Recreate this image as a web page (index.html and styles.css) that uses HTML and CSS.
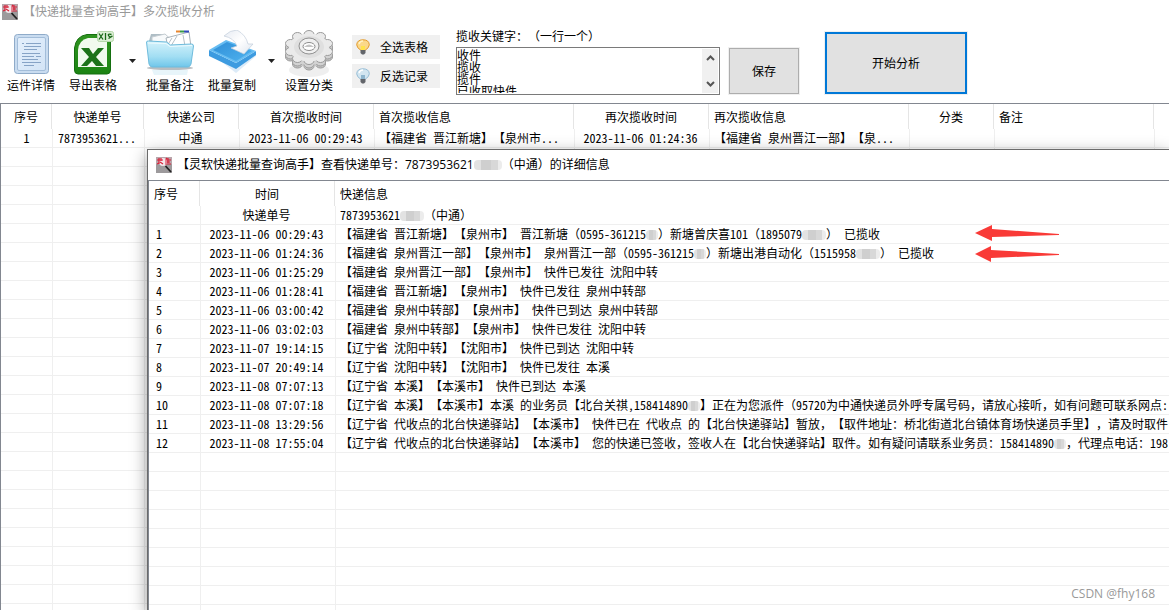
FILE: index.html
```html
<!DOCTYPE html>
<html lang="zh-CN">
<head>
<meta charset="utf-8">
<title>多次揽收分析</title>
<link rel="stylesheet" href="styles.css">
</head>
<body>
<svg class="defs" aria-hidden="true">
  <defs>
    <linearGradient id="paper" x1="0" y1="0" x2="1" y2="1"><stop offset="0" stop-color="#e3effc"/><stop offset="1" stop-color="#d3e4f6"/></linearGradient>
    <linearGradient id="green" x1="0" y1="0" x2="0" y2="1"><stop offset="0" stop-color="#2f9420"/><stop offset="1" stop-color="#1c8413"/></linearGradient>
    <linearGradient id="folder" x1="0" y1="0" x2="0" y2="1"><stop offset="0" stop-color="#d4f2fb"/><stop offset=".6" stop-color="#a2def3"/><stop offset="1" stop-color="#6fc6ea"/></linearGradient>
    <linearGradient id="blue" x1="0" y1="0" x2="1" y2="1"><stop offset="0" stop-color="#2f8fd8"/><stop offset="1" stop-color="#4fb2ee"/></linearGradient>
    <linearGradient id="page" x1="0" y1="0" x2="1" y2="1"><stop offset="0" stop-color="#e6ebf3"/><stop offset=".5" stop-color="#ffffff"/><stop offset="1" stop-color="#dfe6ef"/></linearGradient>
    <symbol id="app" viewBox="0 0 16 16">
      <rect width="16" height="16" fill="#9d9a9c"/>
      <rect width="16" height="7" fill="#b9a5ab"/>
      <circle cx="7" cy="5" r="4" fill="#f3e6ea"/>
      <path d="M1 3h6M3 1v6M5 1v3M4 5l3 2M1 7l2-1M9 3h6M9 5h5M12 1v5M9 7h6M10 1l1 1" stroke="#d8233a" stroke-width="1.200" fill="none"/>
      <path d="M9.500 9l5.500 6" stroke="#222" stroke-width="1.800"/>
    </symbol>
    <g id="cog">
      <g stroke="#9a9a9a">
        <ellipse cx="42.500" cy="14" rx="5" ry="4"/><ellipse cx="42.500" cy="22" rx="5" ry="4"/>
        <ellipse cx="35.500" cy="7" rx="5" ry="4"/><ellipse cx="35.500" cy="29" rx="5" ry="4"/>
        <ellipse cx="24" cy="5" rx="5" ry="4"/><ellipse cx="24" cy="31" rx="5" ry="4"/>
        <ellipse cx="12.500" cy="7" rx="5" ry="4"/><ellipse cx="12.500" cy="29" rx="5" ry="4"/>
        <ellipse cx="5.500" cy="14" rx="5" ry="4"/><ellipse cx="5.500" cy="22" rx="5" ry="4"/>
      </g>
      <ellipse cx="24" cy="18" rx="20" ry="14"/>
    </g>
  </defs>
</svg>

<main class="app">
  <header class="titlebar muted">
    <svg class="appicon" aria-hidden="true"><use href="#app"/></svg>
    <h1>【快递批量查询高手】多次揽收分析</h1>
  </header>

  <div class="toolbar">
    <div class="tools">
      <button class="tool" type="button">
        <svg viewBox="0 0 48 48" aria-hidden="true">
          <rect x="7.500" y="4.500" width="34" height="39" rx="3" fill="#c9dcf0" stroke="#8fabc9"/>
          <rect x="10.500" y="7.500" width="28" height="33" rx="1.500" fill="url(#paper)" stroke="#a3bdd9"/>
          <path d="M15 13.500h2M19 13.500h15M17 16.500h17M17 19.500h13M15 23.500h18M15 26.500h12M29 26.500h5M15 29.500h16M15 32.500h19M17 35.500h10" stroke="#86a3c6"/>
        </svg>
        <span>运件详情</span>
      </button>
      <button class="tool" type="button">
        <svg viewBox="0 0 48 48" aria-hidden="true">
          <path d="M18 4.500H41.500V40Q41.500 44 38 44H9Q5.500 44 5.500 40V18Q7 6 18 4.500Z" fill="url(#green)" stroke="#156f10"/>
          <path d="M19 8H38V37H9V20Q10 10 19 8Z" fill="#f1faee"/>
          <path d="M12 18h8l4 6 5-6h6l-8 9 8 9h-8l-4-5-5 5h-6l8-9z" fill="#1c7219"/>
          <rect x="28.500" y="1.500" width="16" height="10" rx="2" fill="#dcefd5" stroke="#b5d6aa"/>
          <path d="M30 3.500l4 6M34 3.500l-4 6M36.500 3v7M42.500 4.500q-4-1-3 1t3 1-3 2" stroke="#176717" stroke-width="1.300" fill="none"/>
        </svg>
        <span>导出表格</span>
      </button>
      <button class="drop" type="button" aria-label="导出选项"><svg viewBox="0 0 7 4"><path d="M0 0h7L3.500 4z" fill="#222"/></svg></button>
      <button class="tool" type="button">
        <svg viewBox="0 0 48 48" aria-hidden="true">
          <ellipse cx="24" cy="38" rx="23" ry="2" fill="#b9bec2"/>
          <path d="M6 40h36l-1 5H8z" fill="#e8f5fa"/>
          <path d="M3 11l2-7h12l2 3h25v10H3z" fill="#aebdc5"/>
          <path d="M6 7l13-3 10 9-23 8z" fill="#f8fafb" stroke="#c4ccd1"/>
          <path d="M20 8l23-6 2 15H22z" fill="#fff" stroke="#a9b3ba"/>
          <path d="M30 1.500h4" stroke="#e8862e" stroke-width="2"/><path d="M34 1.500h4" stroke="#3a9b48" stroke-width="2"/><path d="M38 1.500h5" stroke="#324bbd" stroke-width="2"/>
          <path d="M26 8l-5 8M31 6l-6 10M37 5l2 11" stroke="#b6bfc6"/>
          <path d="M.500 12q0-1 2-1l18 1 4 3 21-1q2 0 2 2L45 34q-1 3-3 3H6q-2 0-3-3z" fill="url(#folder)" stroke="#6ebbdc"/>
          <path d="M2 13l18 .5 4 3 22-1" stroke="#edfbff" fill="none"/>
        </svg>
        <span>批量备注</span>
      </button>
      <button class="tool" type="button">
        <svg viewBox="0 0 48 48" aria-hidden="true">
          <path d="M1 22l27 21 20-17v-5L28 38z" fill="#dcebf8"/>
          <path d="M1 20L28 33 48 21v4L28 39 1 26z" fill="#3d9be0"/>
          <path d="M1 20L18 10l30 11-20 12z" fill="#67bdf2"/>
          <path d="M5 20l14-8 25 9-16 10z" fill="url(#blue)"/>
          <path d="M16 6Q22 0 29 0 38 5 40 14l5 0-9 10-13-6 6-2Q26 8 16 6z" fill="url(#page)" stroke="#c3cedb" stroke-width=".7"/>
        </svg>
        <span>批量复制</span>
      </button>
      <button class="drop" type="button" aria-label="复制选项"><svg viewBox="0 0 7 4"><path d="M0 0h7L3.500 4z" fill="#222"/></svg></button>
      <button class="tool" type="button">
        <svg viewBox="0 0 48 48" aria-hidden="true">
          <ellipse cx="24" cy="40" rx="20" ry="7" fill="#efefef"/>
          <use href="#cog" y="5" fill="#c6c6c6"/>
          <use href="#cog" y="3" fill="#d2d2d2"/>
          <use href="#cog" y="-.500" fill="#eaeaea"/>
          <ellipse cx="24" cy="17" rx="15" ry="11" fill="#dfdfdf"/>
          <ellipse cx="24" cy="16" rx="10" ry="8" fill="#f0f0f0" stroke="#8f8f8f"/>
          <ellipse cx="24" cy="16.500" rx="6" ry="4" fill="#fff" stroke="#8b8b8b"/>
          <path d="M19 17q5-5 10 0" fill="#c4c4c4"/>
        </svg>
        <span>设置分类</span>
      </button>
    </div>

    <div class="picks">
      <button class="pick" type="button">
        <svg viewBox="0 0 16 16" aria-hidden="true"><path d="M8 .8q6 0 6.300 5Q14 9 10.500 11h-5Q2 9 1.700 5.800 2 .8 8 .8z" fill="#fbd88a" stroke="#e29a2f"/><path d="M4 5q1-3 4-3" stroke="#fff3c8" stroke-width="1.500" fill="none"/><path d="M6 7h4v4H6z" fill="#ffe34d"/><path d="M5.500 11h5v3l-1.500 1.500H7L5.500 14z" fill="#62656a"/></svg>
        <span>全选表格</span>
      </button>
      <button class="pick" type="button">
        <svg viewBox="0 0 16 16" aria-hidden="true"><path d="M8 .8q6 0 6.300 5Q14 9 10.500 11h-5Q2 9 1.700 5.800 2 .8 8 .8z" fill="#d3e6f1" stroke="#96bdd6"/><path d="M4 5q1-3 4-3" stroke="#fff" stroke-width="1.500" fill="none"/><path d="M6 7h4v4H6z" fill="#8fb6cf"/><path d="M5.500 11h5v3l-1.500 1.500H7L5.500 14z" fill="#62656a"/></svg>
        <span>反选记录</span>
      </button>
    </div>

    <div class="keywords">
      <label for="words">揽收关键字：（一行一个）</label>
      <div class="memo">
        <textarea id="words" spellcheck="false">收件
揽收
揽件
已收取快件</textarea>
        <div class="scroller" aria-hidden="true">
          <svg viewBox="0 0 9 6"><path d="M1 5l3.500-3.500L8 5" fill="none" stroke="#555" stroke-width="2"/></svg>
          <svg viewBox="0 0 9 6"><path d="M1 1l3.500 3.500L8 1" fill="none" stroke="#555" stroke-width="2"/></svg>
        </div>
      </div>
    </div>
    <button class="push save" type="button">保存</button>
    <button class="push start" type="button">开始分析</button>
  </div>

  <section class="sheet">
    <table class="grid">
      <colgroup><col class="c-no"><col class="c-code"><col class="c-firm"><col class="c-time"><col class="c-info"><col class="c-time"><col class="c-info"><col class="c-kind"><col class="c-note"><col></colgroup>
      <thead>
        <tr><th>序号</th><th>快递单号</th><th>快递公司</th><th>首次揽收时间</th><th class="left">首次揽收信息</th><th>再次揽收时间</th><th class="left">再次揽收信息</th><th>分类</th><th class="left">备注</th><th></th></tr>
      </thead>
      <tbody>
        <tr><td>1</td><td>7873953621...</td><td>中通</td><td>2023-11-06 00:29:43</td><td class="left">【福建省 晋江新塘】【泉州市...</td><td>2023-11-06 01:24:36</td><td class="left">【福建省 泉州晋江一部】【泉...</td><td></td><td></td><td></td></tr>
        <tr class="blank"><td></td><td></td><td></td><td></td><td></td><td></td><td></td><td></td><td></td><td></td></tr>
      </tbody>
    </table>
  </section>
</main>

<section class="dialog" role="dialog" aria-labelledby="dialog-title">
  <header class="titlebar">
    <svg class="appicon" aria-hidden="true"><use href="#app"/></svg>
    <h2 id="dialog-title">【灵软快递批量查询高手】查看快递单号：7873953621<span class="mask m-title"></span>（中通）的详细信息</h2>
  </header>
  <div class="sheet">
    <table class="grid details">
      <colgroup><col class="c-no"><col class="c-time"><col></colgroup>
      <thead><tr><th class="left">序号</th><th>时间</th><th class="left">快递信息</th></tr></thead>
      <tbody>
        <tr><td></td><td>快递单号</td><td>7873953621<span class="mask m4"></span>（中通）</td></tr>
        <tr><td>1</td><td>2023-11-06 00:29:43</td><td>【福建省 晋江新塘】【泉州市】 晋江新塘（0595-361215<span class="mask m2"></span>）新塘曾庆喜101（1895079<span class="mask m4"></span>） 已揽收</td></tr>
        <tr><td>2</td><td>2023-11-06 01:24:36</td><td>【福建省 泉州晋江一部】【泉州市】 泉州晋江一部（0595-361215<span class="mask m2"></span>）新塘出港自动化（1515958<span class="mask m4"></span>） 已揽收</td></tr>
        <tr><td>3</td><td>2023-11-06 01:25:29</td><td>【福建省 泉州晋江一部】【泉州市】 快件已发往 沈阳中转</td></tr>
        <tr><td>4</td><td>2023-11-06 01:28:41</td><td>【福建省 晋江新塘】【泉州市】 快件已发往 泉州中转部</td></tr>
        <tr><td>5</td><td>2023-11-06 03:00:42</td><td>【福建省 泉州中转部】【泉州市】 快件已到达 泉州中转部</td></tr>
        <tr><td>6</td><td>2023-11-06 03:02:03</td><td>【福建省 泉州中转部】【泉州市】 快件已发往 沈阳中转</td></tr>
        <tr><td>7</td><td>2023-11-07 19:14:15</td><td>【辽宁省 沈阳中转】【沈阳市】 快件已到达 沈阳中转</td></tr>
        <tr><td>8</td><td>2023-11-07 20:49:14</td><td>【辽宁省 沈阳中转】【沈阳市】 快件已发往 本溪</td></tr>
        <tr><td>9</td><td>2023-11-08 07:07:13</td><td>【辽宁省 本溪】【本溪市】 快件已到达 本溪</td></tr>
        <tr><td>10</td><td>2023-11-08 07:07:18</td><td>【辽宁省 本溪】【本溪市】本溪 的业务员【北台关祺,158414890<span class="mask m2"></span>】正在为您派件（95720为中通快递员外呼专属号码，请放心接听，如有问题可联系网点:</td></tr>
        <tr><td>11</td><td>2023-11-08 13:29:56</td><td>【辽宁省 代收点的北台快递驿站】【本溪市】 快件已在 代收点 的【北台快递驿站】暂放，【取件地址：桥北街道北台镇体育场快递员手里】，请及时取件</td></tr>
        <tr><td>12</td><td>2023-11-08 17:55:04</td><td>【辽宁省 代收点的北台快递驿站】【本溪市】 您的快递已签收，签收人在【北台快递驿站】取件。如有疑问请联系业务员：158414890<span class="mask m2"></span>，代理点电话：198</td></tr>
        <tr class="blank"><td></td><td></td><td></td></tr>
      </tbody>
    </table>
  </div>
  <svg class="arrows" viewBox="0 0 88 40" aria-hidden="true">
    <path d="M0 10L17 2v4l67 5v1l-67 2v4z" fill="#f93a37"/>
    <path d="M0 31L16 23v4l68 4v1l-68 3v4z" fill="#f93a37"/>
  </svg>
</section>
<div class="watermark">CSDN @fhy168</div>
</body>
</html>
```

FILE: styles.css
```css
* { box-sizing: border-box; }

body {
  margin: 0;
  height: 100vh;
  overflow: hidden;
  position: relative;
  background: #fff;
  color: #000;
  font-family: "Noto Sans Mono CJK SC", "Noto Sans CJK SC", sans-serif;
  font-size: 12px;
  line-height: 18px;
  text-spacing-trim: space-all;
}

button, textarea {
  font: inherit;
  color: inherit;
}

button {
  margin: 0;
  padding: 0;
  border: 0;
  background: none;
}

.defs { position: absolute; width: 0; height: 0; }

.app {
  display: flex;
  flex-direction: column;
  height: 100%;
}

/* Title bars */
.titlebar {
  display: flex;
  align-items: center;
  flex: none;
  gap: 5px;
  padding-left: 8px;
  height: 30px;
  font-family: "Open Sans", "Noto Sans CJK SC", sans-serif;
}

.titlebar.muted {
  height: 24px;
  padding-left: 2px;
  color: #999;
}

.titlebar h1, .titlebar h2 {
  margin: 0;
  font-size: 12px;
  font-weight: 400;
  white-space: nowrap;
}

.appicon { width: 16px; height: 16px; flex: none; }

/* Toolbar */
.toolbar {
  display: flex;
  align-items: flex-start;
  flex: none;
  height: 79px;
  padding: 4px 0 0 7px;
  white-space: nowrap;
}

.tools { display: flex; width: 345px; }

.tool {
  display: flex;
  flex-direction: column;
  align-items: center;
  width: 48px;
  margin-right: 14px;
  padding-top: 2px;
}

.tool svg { width: 48px; height: 48px; margin-bottom: -2px; }

.drop {
  display: flex;
  align-items: center;
  width: 7px;
  height: 66px;
  margin: 0 10px 0 -2px;
}

.drop svg { width: 7px; height: 4px; }

.picks { display: grid; gap: 5px; padding-top: 7px; width: 104px; }

.pick {
  display: flex;
  align-items: center;
  gap: 9px;
  width: 88px;
  height: 24px;
  padding-left: 3px;
  background: #f0f0f0;
}

.pick svg { width: 16px; height: 16px; }

.keywords { display: flex; flex-direction: column; gap: 4px; width: 264px; }
.keywords label { line-height: 15px; }

.memo {
  display: flex;
  height: 48px;
  padding: 1px 1px 1px 0;
  border: 1px solid #7a7a7a;
}

.memo textarea {
  flex: 1;
  padding: 0;
  border: 0;
  outline: 0;
  resize: none;
  overflow: hidden;
  line-height: 12px;
}

.scroller {
  display: flex;
  flex-direction: column;
  justify-content: space-between;
  align-items: center;
  width: 16px;
  padding: 6px 0;
  background: #f0f0f0;
}

.scroller svg { width: 9px; height: 6px; }

.push {
  border: 1px solid #adadad;
  background: #e1e1e1;
  box-shadow: 0 0 0 1px #f0f0f0;
}

.save { width: 70px; height: 46px; margin: 20px 26px 0 9px; }
.start { width: 142px; height: 62px; margin-top: 4px; border: 2px solid #0078d7; }

/* Tables */
.sheet {
  flex: 1;
  min-height: 0;
  overflow: hidden;
  border-top: 1px solid #828790;
  border-left: 1px solid #828790;
}

.grid {
  width: 100%;
  table-layout: fixed;
  border-collapse: separate;
  border-spacing: 0;
}

.c-no { width: 51px; }
.c-code { width: 92px; }
.c-firm { width: 95px; }
.c-time { width: 135px; }
.c-info { width: 200px; }
.c-kind { width: 85px; }
.c-note { width: 160px; }

.grid th {
  height: 25px;
  padding: 0;
  border-right: 1px solid #e5e5e5;
  font-weight: 400;
  white-space: nowrap;
}

.grid td {
  height: 19px;
  padding: 0 3px 0 0;
  border-left: 1px solid #efefef;
  border-bottom: 1px solid #efefef;
  text-align: center;
  white-space: nowrap;
  overflow: hidden;
}

.grid td:first-child { padding: 0; border-left: 0; }
.grid th:last-child { border-right: 0; }
.grid th.left { padding-left: 5px; text-align: left; }
.grid td.left { padding: 0 0 0 4px; text-align: left; }

.details td:first-child { padding-left: 7px; text-align: left; }
.details td:last-child { padding: 0 0 0 4px; text-align: left; }

.grid .blank td {
  height: 600px;
  background: repeating-linear-gradient(#fff 0 18px, #efefef 18px 19px);
}

/* Detail window */
.dialog {
  position: absolute;
  top: 149px;
  left: 147px;
  right: 0;
  bottom: 0;
  display: flex;
  flex-direction: column;
  background: #fff;
  border-top: 1px solid #6b6b6b;
  border-left: 1px solid #6b6b6b;
  box-shadow: 0 5px 16px rgba(0, 0, 0, .4);
}

.mask {
  display: inline-block;
  height: 10px;
  border-radius: 4px;
  vertical-align: -1px;
  background: linear-gradient(90deg, #e2e2e2 0 25%, #cfcfcf 25% 60%, #d8d8d8 60% 85%, #ececec 85%);
}

.m2 { width: 12px; }
.m4 { width: 24px; }
.m-title { width: 28px; }

.arrows {
  position: absolute;
  top: 73px;
  left: 827px;
  width: 88px;
  height: 40px;
}

.watermark {
  position: absolute;
  right: 14px;
  bottom: 7px;
  color: #999;
  font-family: "Open Sans", sans-serif;
}
```
